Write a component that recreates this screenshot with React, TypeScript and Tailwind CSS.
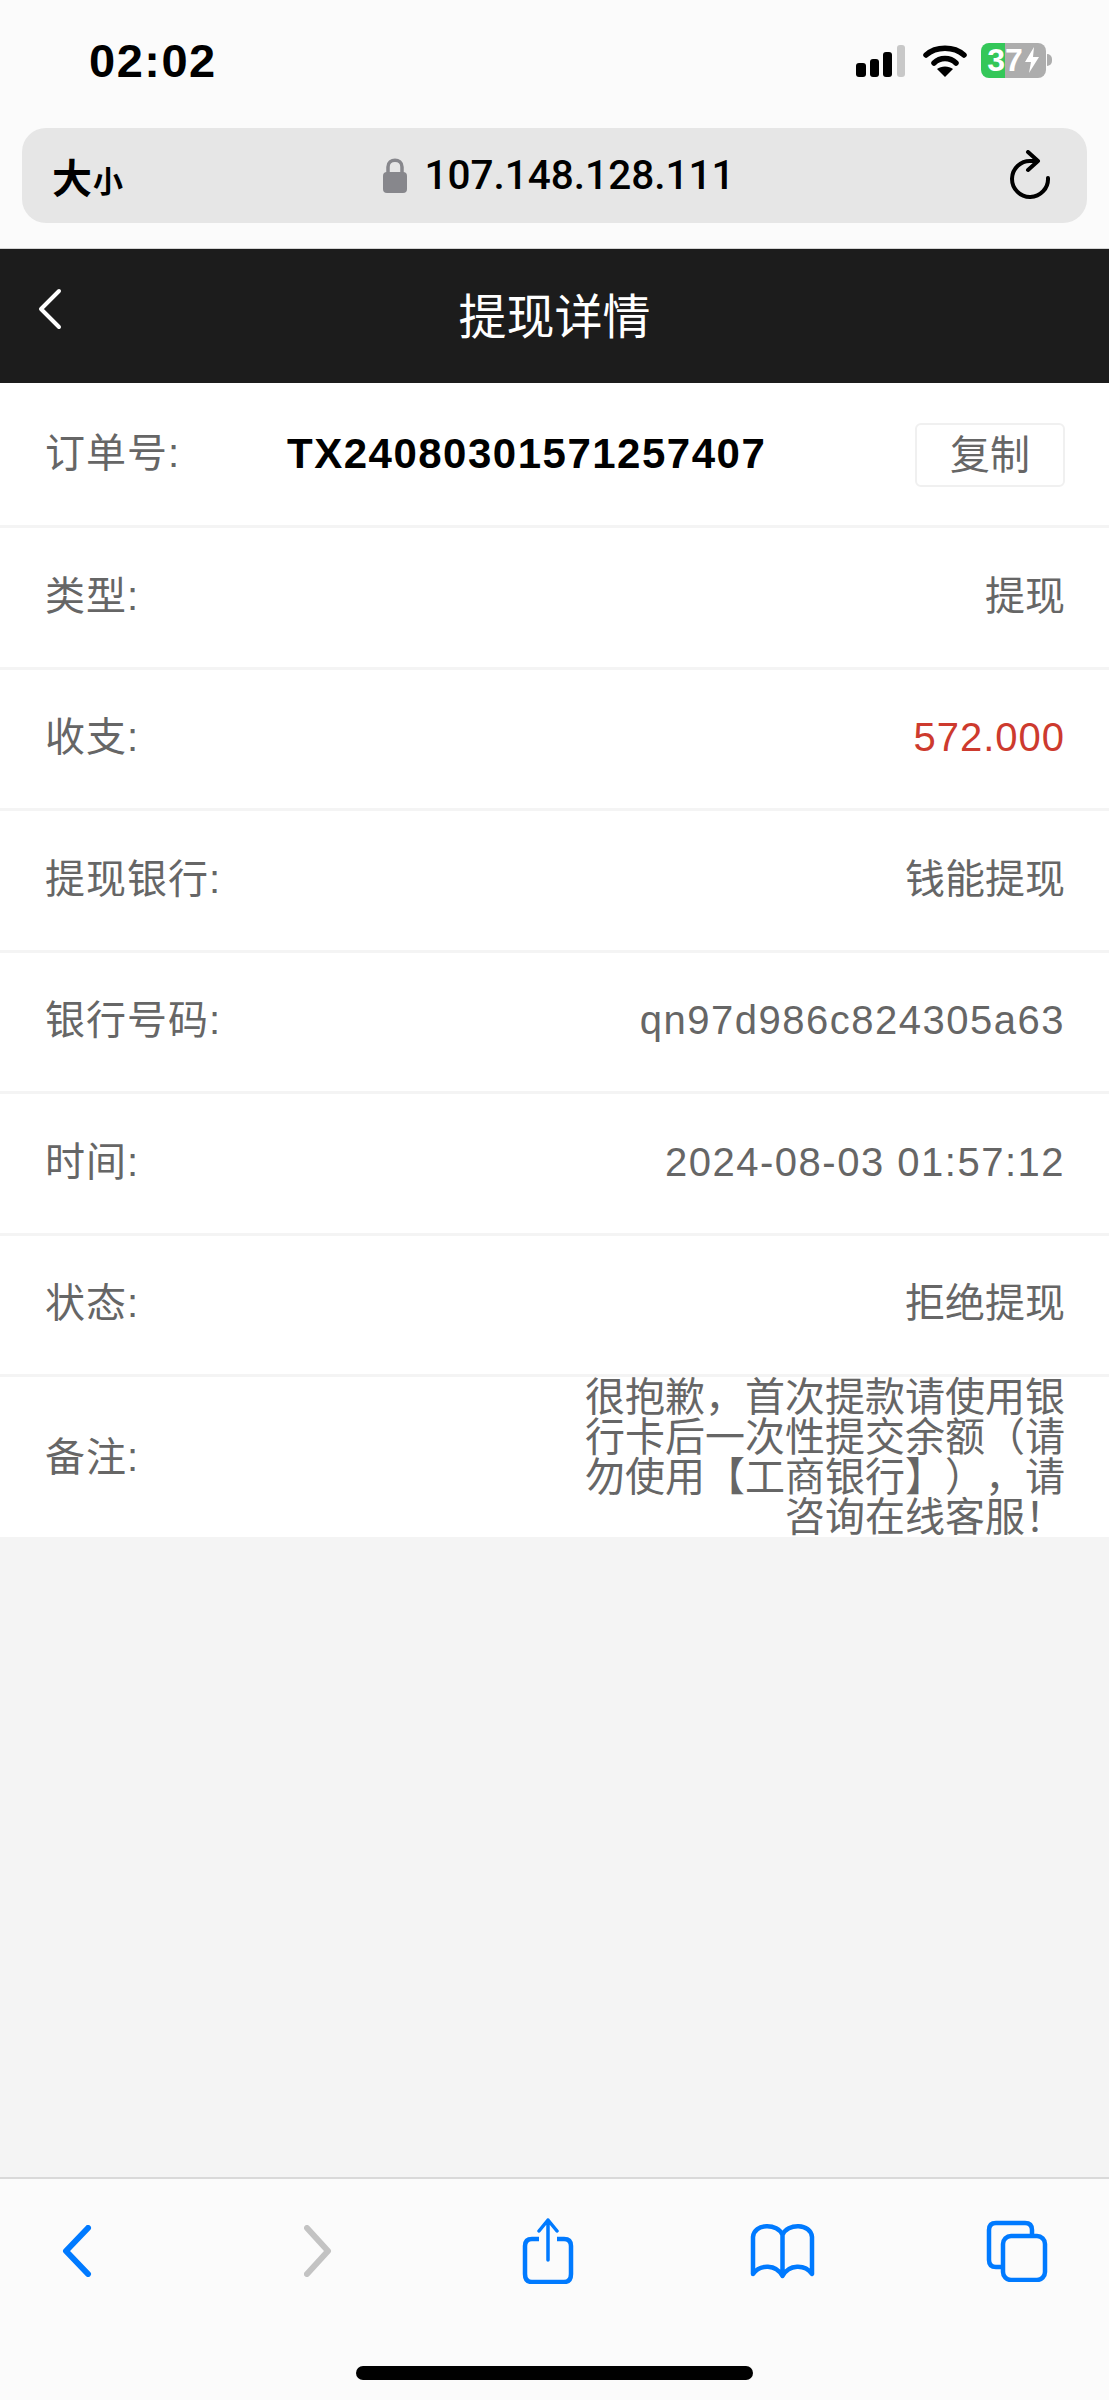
const sans = 'font-["Liberation_Sans","Noto_Sans_CJK_SC",sans-serif]';

const note =
  '很抱歉\uFF0C首次提款请使用银行卡后一次性提交余额\uFF08请勿使用【工商银行】\uFF09\uFF0C请咨询在线客服\uFF01';

const rows = [
  { label: '类型:', value: '提现' },
  { label: '收支:', value: '572.000', red: true },
  { label: '提现银行:', value: '钱能提现' },
  { label: '银行号码:', value: 'qn97d986c824305a63', latin: true },
  { label: '时间:', value: '2024-08-03 01:57:12', latin: true },
  { label: '状态:', value: '拒绝提现' },
];

function StatusBar() {
  return (
    <div className="flex h-[120px] items-center">
      <span className="ml-[89px] text-[47px] leading-none font-bold tracking-[1.5px] text-black">02:02</span>
      <div className="ml-auto mr-[57px] flex items-center">
        <svg width="50" height="32" viewBox="0 0 50 32" className="mt-[1px]">
          <rect x="0" y="18" width="10" height="14" rx="3" fill="#000" />
          <rect x="14" y="14" width="9" height="18" rx="3" fill="#000" />
          <rect x="27" y="7" width="9" height="25" rx="3" fill="#000" />
          <rect x="41" y="0" width="8" height="32" rx="3" fill="#c8c8c8" />
        </svg>
        <svg width="44" height="34" viewBox="0 0 44 34" className="ml-[17px]">
          <path d="M3 12 C13 3 31 3 41 12" fill="none" stroke="#000" strokeWidth="5.5" strokeLinecap="round" />
          <path d="M11 20 C17 14 27 14 33 20" fill="none" stroke="#000" strokeWidth="5.5" strokeLinecap="round" />
          <path d="M22 34 L14 26 C18 22.500 26 22.500 30 26 Z" fill="#000" />
        </svg>
        <div className="ml-[14px] flex h-[35px] w-[65px] items-center justify-center rounded-[8px] bg-[linear-gradient(90deg,#34c759_37%,#adadad_37%)] text-[32px] leading-none font-bold text-white">
          <span>37</span>
          <svg width="16" height="26" viewBox="0 0 16 26" className="ml-[1px]">
            <path d="M10 0 L1 15 H7 L5 26 L15 10 H9 Z" fill="#fff" />
          </svg>
        </div>
        <div className="ml-[1px] h-[12px] w-[5px] rounded-r-full bg-[#adadad]" />
      </div>
    </div>
  );
}

function AddressBar() {
  return (
    <div className="mx-[22px] flex h-[95px] items-center rounded-[24px] bg-[#e6e6e6] pl-[30px] pr-[34px]">
      <div className="flex w-[121px] items-end font-['Noto_Sans_CJK_SC',sans-serif] font-bold text-black">
        <span className="text-[40px] leading-[44px]">大</span>
        <span className="ml-[1px] text-[30px] leading-[38px]">小</span>
      </div>
      <div className="flex flex-1 items-center justify-center pr-[66px]">
        <svg width="26" height="35" viewBox="0 0 26 35" className="mr-[17px]">
          <path d="M6 15 V9 C6 0 20 0 20 9 V15" fill="none" stroke="#87878c" strokeWidth="3.500" />
          <rect x="1" y="14" width="24" height="21" rx="4" fill="#87878c" />
        </svg>
        <span className="font-['Roboto',sans-serif] text-[40.5px] leading-none font-medium text-black">107.148.128.111</span>
      </div>
      <svg width="44" height="50" viewBox="0 0 44 50" className="mb-[2px]">
        <path d="M39 28 A18 18 0 1 1 22 11 H28" fill="none" stroke="#000" strokeWidth="4" strokeLinecap="round" />
        <path d="M19 2 L29 11 L19 20" fill="none" stroke="#000" strokeWidth="4" strokeLinecap="round" strokeLinejoin="round" />
      </svg>
    </div>
  );
}

function Row({ label, value, red, latin }: { label: string; value: string; red?: boolean; latin?: boolean }) {
  let valueClass = 'text-[#666]';
  if (red) valueClass = 'tracking-[1px] text-[#cd3a2e]';
  if (latin) valueClass = 'tracking-[1.5px] text-[#666]';
  return (
    <div className="flex h-[141.5px] items-center justify-between border-b-[3px] border-[#f4f4f4] pr-[44px] pb-[3px] pl-[45px]">
      <span className="tracking-[1px] text-[#666]">{label}</span>
      <span className={valueClass}>{value}</span>
    </div>
  );
}

function BottomBar() {
  return (
    <div className="flex h-[223px] flex-col border-t-[2px] border-[#d9d9d9] bg-[#fbfbfb]">
      <div className="flex h-[187px] items-center pl-[62px] pb-[44px]">
        <svg width="30" height="52" viewBox="0 0 30 52">
          <path d="M26 3 L4 26 L26 49" fill="none" stroke="#007aff" strokeWidth="6" strokeLinecap="round" strokeLinejoin="round" />
        </svg>
        <svg width="28" height="52" viewBox="0 0 28 52" className="ml-[212px]">
          <path d="M3 3 L24 26 L3 49" fill="none" stroke="#c3c3c3" strokeWidth="6" strokeLinecap="round" strokeLinejoin="round" />
        </svg>
        <svg width="52" height="66" viewBox="0 0 52 66" className="ml-[190px]">
          <path d="M17 21 H10 Q3 21 3 28 V56 Q3 64 10 64 H42 Q49 64 49 56 V28 Q49 21 42 21 H35" fill="none" stroke="#007aff" strokeWidth="4.500" />
          <path d="M26 42 V2 M17 13 L26 2 L35 13" fill="none" stroke="#007aff" strokeWidth="3.500" strokeLinecap="round" strokeLinejoin="round" />
        </svg>
        <svg width="65" height="56" viewBox="0 0 65 56" className="ml-[176px]">
          <path d="M32.500 12 C28 0 4 0 3 14 V51 C10 41 26 41 32.500 53 C39 41 55 41 62 51 V14 C61 0 37 0 32.500 12 Z M32.500 12 V53" fill="none" stroke="#007aff" strokeWidth="4.500" strokeLinejoin="round" />
        </svg>
        <svg width="62" height="62" viewBox="0 0 62 62" className="ml-[171px]">
          <path d="M46 14 V10 Q46 3 39 3 H10 Q3 3 3 10 V40 Q3 47 10 47 H15" fill="none" stroke="#007aff" strokeWidth="4.500" />
          <rect x="17" y="16" width="42" height="44" rx="8" fill="none" stroke="#007aff" strokeWidth="4.500" />
        </svg>
      </div>
      <div className="flex justify-center">
        <div className="h-[14px] w-[397px] rounded-full bg-black" />
      </div>
    </div>
  );
}

export default function App() {
  return (
    <div className={`flex h-[2400px] w-[1109px] flex-col overflow-hidden bg-[#f4f4f4] text-[40px] leading-[40px] ${sans}`}>
      <div className="h-[249px] border-b border-[#d4d4d4] bg-[#fbfbfb]">
        <StatusBar />
        <div className="mt-[8px]">
          <AddressBar />
        </div>
      </div>

      <div className="grid h-[134px] grid-cols-[1fr_auto_1fr] items-center bg-[#1c1c1c] pl-[38px] text-white">
        <svg width="24" height="42" viewBox="0 0 24 42" className="mb-[14px]">
          <path d="M21 3 L3 21 L21 39" fill="none" stroke="#fff" strokeWidth="4" strokeLinecap="round" strokeLinejoin="round" />
        </svg>
        <span className="mt-[3px] mr-[38px] text-[48px] leading-[48px]">提现详情</span>
      </div>

      <div className="bg-white">
        <div className="flex h-[145px] items-center border-b-[3px] border-[#f4f4f4] pr-[44px] pl-[45px]">
          <span className="mb-[2px] w-[242px] tracking-[1px] text-[#666]">订单号:</span>
          <span className="text-[42px] font-bold tracking-[1.5px] text-black">TX24080301571257407</span>
          <button className="mt-[2px] ml-auto h-[64px] w-[150px] rounded-[6px] border-[2px] border-[#f0f0f0] text-center text-[#666]">复制</button>
        </div>
        {rows.map((r) => (
          <Row key={r.label} {...r} />
        ))}
        <div className="flex h-[160px] items-center justify-between pr-[44px] pl-[45px]">
          <span className="tracking-[1px] text-[#666]">备注:</span>
          <p className="w-[482px] text-right text-[#666] [text-spacing-trim:space-all]">{note}</p>
        </div>
      </div>

      <div className="flex-1" />
      <BottomBar />
    </div>
  );
}
